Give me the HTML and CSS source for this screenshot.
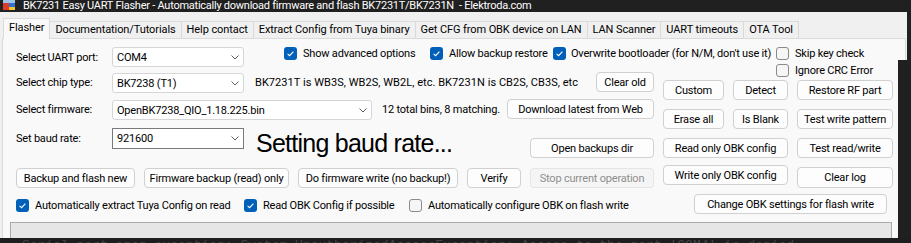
FILE: index.html
```html
<!DOCTYPE html>
<html lang="en">
<head>
    <meta charset="UTF-8">
    <title>BK7231 Easy UART Flasher</title>
    <link rel="stylesheet" href="styles.css">
</head>
<body>
    <div class="window">
        <div class="titlebar">
            <svg class="app-icon" width="12" height="10" viewBox="0 0 12 10">
                <rect x="0" y="0" width="12" height="3" fill="#9cc3ea"/>
                <rect x="0" y="3" width="6" height="7" fill="#e03b2a"/>
                <rect x="6" y="3" width="6" height="4" fill="#2f6fd1"/>
                <rect x="6" y="7" width="6" height="3" fill="#f2c230"/>
            </svg>
            <span>BK7231 Easy UART Flasher - Automatically download firmware and flash BK7231T/BK7231N&nbsp; - Elektroda.com</span>
        </div>

        <div class="tabs">
            <div class="tab active">Flasher</div>
            <div class="tab">Documentation/Tutorials</div>
            <div class="tab">Help contact</div>
            <div class="tab">Extract Config from Tuya binary</div>
            <div class="tab">Get CFG from OBK device on LAN</div>
            <div class="tab">LAN Scanner</div>
            <div class="tab">UART timeouts</div>
            <div class="tab">OTA Tool</div>
        </div>

        <div class="page">
            <div class="row-top">
                <div class="lbl">Select UART port:</div>
                <div class="combo"><span>COM4</span><svg width="8" height="5" viewBox="0 0 8 5"><path d="M0.5 0.5 L4 4 L7.5 0.5" stroke="#606060" fill="none"/></svg></div>
                <div class="opts">
                    <label class="chk opt-adv"><span class="box on"></span>Show advanced options</label>
                    <label class="chk opt-restore"><span class="box on"></span>Allow backup restore</label>
                    <label class="chk opt-boot"><span class="box on"></span>Overwrite bootloader (for N/M, don't use it)</label>
                    <div class="opt-stack">
                        <label class="chk"><span class="box"></span>Skip key check</label>
                        <label class="chk"><span class="box"></span>Ignore CRC Error</label>
                    </div>
                </div>
            </div>

            <div class="main">
                <div class="left">
                    <div class="row row-chip">
                        <div class="lbl">Select chip type:</div>
                        <div class="combo low"><span>BK7238 (T1)</span><svg width="8" height="5" viewBox="0 0 8 5"><path d="M0.5 0.5 L4 4 L7.5 0.5" stroke="#606060" fill="none"/></svg></div>
                        <div class="info info-chip">BK7231T is WB3S, WB2S, WB2L, etc. BK7231N is CB2S, CB3S, etc</div>
                        <div class="btn btn-clear">Clear old</div>
                    </div>
                    <div class="row row-fw">
                        <div class="lbl">Select firmware:</div>
                        <div class="combo low wide"><span>OpenBK7238_QIO_1.18.225.bin</span><svg width="8" height="5" viewBox="0 0 8 5"><path d="M0.5 0.5 L4 4 L7.5 0.5" stroke="#606060" fill="none"/></svg></div>
                        <div class="info info-fw">12 total bins, 8 matching.</div>
                        <div class="btn btn-download">Download latest from Web</div>
                    </div>
                    <div class="row row-baud">
                        <div class="lbl lbl-baud">Set baud rate:</div>
                        <div class="combo focused"><span>921600</span><svg width="8" height="5" viewBox="0 0 8 5"><path d="M0.5 0.5 L4 4 L7.5 0.5" stroke="#606060" fill="none"/></svg></div>
                        <div class="status">Setting baud rate...</div>
                        <div class="btn btn-backups">Open backups dir</div>
                    </div>
                    <div class="row row-btns">
                        <div class="btn b-flash">Backup and flash new</div>
                        <div class="btn b-read">Firmware backup (read) only</div>
                        <div class="btn b-write">Do firmware write (no backup!)</div>
                        <div class="btn b-verify">Verify</div>
                        <div class="btn b-stop disabled">Stop current operation</div>
                    </div>
                    <div class="row row-chks">
                        <label class="chk opt-tuya"><span class="box on"></span>Automatically extract Tuya Config on read</label>
                        <label class="chk opt-obk"><span class="box on"></span>Read OBK Config if possible</label>
                        <label class="chk"><span class="box"></span>Automatically configure OBK on flash write</label>
                    </div>
                </div>

                <div class="right">
                    <div class="btn">Custom</div>
                    <div class="btn">Detect</div>
                    <div class="btn">Restore RF part</div>
                    <div class="btn">Erase all</div>
                    <div class="btn">Is Blank</div>
                    <div class="btn">Test write pattern</div>
                    <div class="btn span2">Read only OBK config</div>
                    <div class="btn">Test read/write</div>
                    <div class="btn span2 up">Write only OBK config</div>
                    <div class="btn tall">Clear log</div>
                    <div class="btn btn-settings">Change OBK settings for flash write</div>
                </div>
            </div>

            <div class="log"></div>
        </div>
    </div>

    <!-- dark window lying over the flasher -->
    <div class="shade-right"></div>
    <div class="shade-bottom">Serial port open exception: System.UnauthorizedAccessException: Access to the port 'COM4' is denied.</div>
</body>
</html>
```

FILE: styles.css
```css
* { box-sizing: border-box; }

body {
    margin: 0;
    width: 911px;
    height: 243px;
    overflow: hidden;
    position: relative;
    background: #202020;
    font-family: "Segoe UI", Roboto, sans-serif;
    font-size: 11px;
    letter-spacing: -0.2px;
    color: #000;
}

.window { width: 907px; height: 243px; background: #f0f0f0; }

.titlebar {
    height: 12px;
    background: #202020;
    color: #fff;
    display: flex;
    align-items: flex-start;
    line-height: 11px;
    letter-spacing: -0.25px;
    white-space: nowrap;
}
.app-icon { margin: 0 8px 0 3px; flex: none; }

.tabs {
    height: 26px;
    display: flex;
    align-items: flex-end;
    padding-left: 3px;
}
.tab {
    height: 17px;
    line-height: 16px;
    padding: 0 5px;
    border: 1px solid #dadada;
    border-bottom: none;
    margin-right: -1px;
    background: #f0f0f0;
    letter-spacing: -0.09px;
    white-space: nowrap;
}
.tab.active {
    height: 21px;
    margin-bottom: -1px;
    line-height: 17px;
    background: #f9f9f9;
    position: relative;
    z-index: 1;
}

.page {
    margin-left: 2px;
    width: 904px;
    height: 205px;
    border: 1px solid #dadada;
    background: #f9f9f9;
    padding: 8px 0 0 13px;
}

.lbl { width: 96px; flex: none; white-space: nowrap; }

.combo {
    width: 132px;
    height: 20px;
    flex: none;
    display: flex;
    align-items: center;
    justify-content: space-between;
    padding: 0 4px 0 4px;
    background: #fff;
    border: 1px solid #d6d6d6;
    border-radius: 3px;
    white-space: nowrap;
}
.combo.wide { width: 260px; }
.combo.low { align-self: flex-end; }
.combo.focused { height: 21px; border-color: #7a7a7a; border-radius: 0; }

.chk {
    display: flex;
    align-items: center;
    gap: 6px;
    height: 13px;
    white-space: nowrap;
    flex: none;
}
.box {
    width: 13px;
    height: 13px;
    flex: none;
    border: 1px solid #8a8a8a;
    border-radius: 3px;
    background: #f6f6f6;
}
.box.on {
    border: none;
    background: #005fb8 url("data:image/svg+xml,%3Csvg xmlns='http://www.w3.org/2000/svg' width='13' height='13'%3E%3Cpath d='M3.6 6.8 L5.6 8.7 L9.4 4.6' stroke='white' stroke-width='1.1' fill='none'/%3E%3C/svg%3E") no-repeat;
}

.row-top { display: flex; height: 20px; align-items: center; }
.opts { display: flex; margin-left: 40px; align-self: flex-start; }
.opt-adv { width: 146px; }
.opt-restore { width: 123px; }
.opt-boot { width: 223px; gap: 5px; }
.opt-stack { display: flex; flex-direction: column; gap: 4px; }

.main { display: flex; gap: 9px; margin-top: 5px; }
.left { width: 638px; display: flex; flex-direction: column; }

.row { display: flex; align-items: center; }
.row-chip { height: 21px; }
.row-fw { height: 21px; margin-top: 6px; }
.row-baud { height: 30px; margin-top: 8px; align-items: flex-start; }
.row-btns { height: 20px; margin-top: 10px; gap: 9px; }
.row-chks { height: 13px; margin-top: 11px; }

.info { margin-left: 11px; white-space: nowrap; }
.info-chip { letter-spacing: 0.05px; }
.info-fw { margin-left: 10px; }
.lbl-baud { line-height: 21px; }
.status {
    margin-left: 12px;
    font-family: "Liberation Sans", Arial, sans-serif;
    font-size: 25px;
    letter-spacing: -0.75px;
    line-height: 30px;
    white-space: nowrap;
}

.btn {
    height: 20px;
    display: flex;
    align-items: center;
    justify-content: center;
    background: #fdfdfd;
    border: 1px solid #d0d0d0;
    border-radius: 4px;
    white-space: nowrap;
}
.btn.disabled { background: #f5f5f5; border-color: #e5e5e5; color: #8f8f8f; }

.btn-clear { width: 58px; margin-left: auto; align-self: flex-start; }
.btn-download { width: 147px; margin-left: auto; align-self: flex-start; }
.btn-backups { width: 124px; margin-left: auto; align-self: flex-end; }

.b-flash { width: 119px; }
.b-read { width: 145px; }
.b-write { width: 160px; }
.b-verify { width: 54px; }
.b-stop { width: 124px; }

.opt-tuya { width: 228px; }
.opt-obk { width: 165px; }

.right {
    display: grid;
    grid-template-columns: 61px 55px 96px;
    grid-template-rows: repeat(5, 20px);
    column-gap: 9px;
    row-gap: 9px;
    margin-top: 8px;
    align-self: flex-start;
}
.right .span2 { grid-column: span 2; }
.right .up { margin-top: -2px; }
.right .tall { height: 21px; }
.btn-settings {
    grid-column: 1 / -1;
    justify-self: end;
    width: 193px;
    margin: -2px 6px 0 0;
}

.log {
    margin: 6px 0 0 -6px;
    width: 882px;
    height: 40px;
    background: #e6e6e6;
    border: 1px solid #ababab;
}

.shade-right {
    position: absolute;
    left: 898px;
    top: 60px;
    width: 13px;
    bottom: 0;
    background: #202020;
}
.shade-bottom {
    position: absolute;
    left: 0;
    right: 0;
    top: 238px;
    bottom: 0;
    overflow: hidden;
    background: #1e1e1e;
    color: #444;
    font-family: "Liberation Mono", monospace;
    font-size: 13px;
    letter-spacing: 0;
    line-height: 13px;
    padding: 1px 0 0 22px;
    white-space: nowrap;
}
```
